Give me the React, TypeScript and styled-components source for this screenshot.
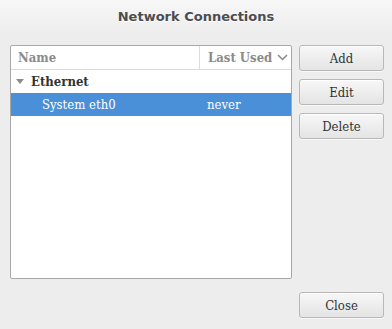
import styled, { createGlobalStyle } from 'styled-components';

const serif = '"DejaVu Serif Condensed", "DejaVu Serif", serif';

const GlobalStyle = createGlobalStyle`
  html, body {
    margin: 0;
    padding: 0;
    background: #ededed;
  }
  body {
    font-family: ${serif};
    font-stretch: semi-condensed;
  }
`;

const Janela = styled.div`
  width: 392px;
  height: 329px;
  display: flex;
  flex-direction: column;
  background: #ededed;
  overflow: hidden;
`;

const BarraTitulo = styled.div`
  height: 34px;
  display: flex;
  align-items: center;
  justify-content: center;
  background: linear-gradient(to bottom, #f7f7f7, #ededed);
`;

const Titulo = styled.h1`
  margin: 0;
  padding-bottom: 2px;
  font-family: "DejaVu Sans", sans-serif;
  font-stretch: normal;
  font-size: 13px;
  font-weight: bold;
  color: #4b4d4e;
  text-shadow: 0 1px 0 #ffffff;
`;

const Corpo = styled.div`
  display: flex;
  gap: 7px;
  padding: 11px 8px 0 10px;
`;

const Lista = styled.div`
  width: 280px;
  height: 232px;
  border: 1px solid #a8a8a8;
  border-radius: 2px;
  background: #ffffff;
  display: flex;
  flex-direction: column;
`;

const Cabecalho = styled.div`
  display: grid;
  grid-template-columns: 188px 1fr;
  height: 23px;
  border-bottom: 1px solid #dcdcdc;
`;

const Coluna = styled.div<{ $divider?: boolean }>`
  display: flex;
  align-items: center;
  gap: 5px;
  white-space: nowrap;
  padding-left: ${({ $divider }) => ($divider ? '8px' : '7px')};
  border-left: ${({ $divider }) => ($divider ? '1px solid #dcdcdc' : 'none')};
  font-size: 13px;
  font-weight: bold;
  color: #8a8a8a;
`;

const Linha = styled.div<{ $selected?: boolean }>`
  display: grid;
  grid-template-columns: 188px 1fr;
  height: 23px;
  align-items: center;
  font-size: 13px;
  background: ${({ $selected }) => ($selected ? '#4a90d9' : 'transparent')};
  color: ${({ $selected }) => ($selected ? '#ffffff' : '#2e3436')};
`;

const Celula = styled.div<{ $indent: number; $bold?: boolean }>`
  display: flex;
  align-items: center;
  gap: 7px;
  white-space: nowrap;
  padding-left: ${({ $indent }) => `${$indent}px`};
  font-weight: ${({ $bold }) => ($bold ? 'bold' : 'normal')};
`;

const Seta = styled.span`
  width: 0;
  height: 0;
  border-left: 4px solid transparent;
  border-right: 4px solid transparent;
  border-top: 5px solid #8c8c8c;
`;

const Botoes = styled.div`
  display: flex;
  flex-direction: column;
  gap: 8px;
`;

const Botao = styled.button`
  width: 85px;
  height: 26px;
  padding: 0;
  border: 1px solid #b8b8b8;
  border-radius: 3px;
  background: linear-gradient(to bottom, #f7f7f7, #e4e4e4);
  box-shadow: inset 0 1px 0 #ffffff, 0 1px 0 rgba(255, 255, 255, 0.6);
  font-family: ${serif};
  font-stretch: semi-condensed;
  font-size: 13px;
  color: #2e3436;
`;

const Rodape = styled.div`
  display: flex;
  justify-content: flex-end;
  padding: 13px 8px 0 0;
`;

export default function App() {
  return (
    <Janela>
      <GlobalStyle />
      <BarraTitulo>
        <Titulo>Network Connections</Titulo>
      </BarraTitulo>
      <Corpo>
        <Lista>
          <Cabecalho>
            <Coluna>Name</Coluna>
            <Coluna $divider>
              Last Used
              <svg width="11" height="7" viewBox="0 0 11 7">
                <path d="M1 1 L5.5 5.5 L10 1" fill="none" stroke="#8a8a8a" strokeWidth="1.5" />
              </svg>
            </Coluna>
          </Cabecalho>
          <Linha>
            <Celula $indent={5} $bold>
              <Seta />
              Ethernet
            </Celula>
            <div />
          </Linha>
          <Linha $selected>
            <Celula $indent={31}>System eth0</Celula>
            <Celula $indent={8}>never</Celula>
          </Linha>
        </Lista>
        <Botoes>
          <Botao>Add</Botao>
          <Botao>Edit</Botao>
          <Botao>Delete</Botao>
        </Botoes>
      </Corpo>
      <Rodape>
        <Botao>Close</Botao>
      </Rodape>
    </Janela>
  );
}
